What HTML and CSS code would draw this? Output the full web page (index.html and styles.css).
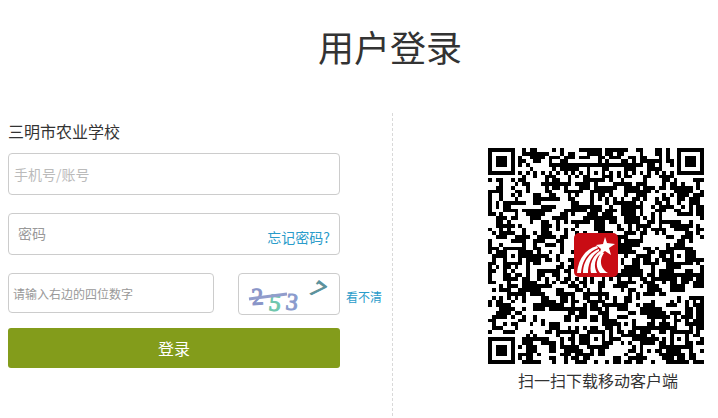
FILE: index.html
```html
<!DOCTYPE html>
<html lang="zh-CN">
<head>
  <meta charset="UTF-8">
  <meta name="viewport" content="width=device-width, initial-scale=1">
  <title>用户登录</title>
  <link rel="stylesheet" href="styles.css">
</head>
<body>
  <h1 class="title">用户登录</h1>
  <main class="content">
    <form class="login" onsubmit="return false">
      <h2 class="school">三明市农业学校</h2>
      <div class="field">
        <input class="account" type="text" placeholder="手机号/账号" aria-label="手机号/账号">
      </div>
      <div class="field">
        <input class="password" type="password" placeholder="密码" aria-label="密码">
        <a class="forgot" href="#">忘记密码?</a>
      </div>
      <div class="verify">
        <input class="code" type="text" placeholder="请输入右边的四位数字" aria-label="请输入右边的四位数字">
        <svg class="captcha" viewBox="0 0 100 40" role="img" aria-label="验证码">
          <text transform="translate(13 31) rotate(-4)" fill="#8995c8" stroke="#8995c8">2</text>
          <text transform="translate(29 36) rotate(7)" fill="#70c7ad" stroke="#70c7ad">5</text>
          <text transform="translate(46 35) rotate(8)" fill="#8a9bcd" stroke="#8a9bcd">3</text>
          <text transform="translate(69 18) rotate(38)" fill="#5c929c" stroke="#5c929c">7</text>
          <path d="M10 25L48 20" stroke="#929dcc" stroke-width="3"/>
        </svg>
        <a class="refresh" href="#">看不清</a>
      </div>
      <button class="submit" type="submit">登录</button>
    </form>
    <aside class="download">
      <figure>
        <svg class="qr" viewBox="0 0 216 216" role="img" aria-label="二维码">
          <g transform="scale(3.78947)">
            <path id="modules" shape-rendering="crispEdges"/>
          </g>
          <g transform="translate(86 85)">
            <rect width="44" height="44" rx="5" fill="#c90c14"/>
            <g fill="#fff">
              <path d="M31 4L33 10L41 11L35 15L37 22L31 18L25 22L27 16L22 12L29 11Z"/>
              <path d="M23 13C11 16 4 27 3 40L7 40C8 28 14 19 24 15Z"/>
              <path d="M25 16C15 20 9 29 9 40L14 40C14 30 18 22 25 18Z"/>
              <path d="M26 18C19 23 15 31 17 40L23 40C19 33 21 25 27 20Z"/>
              <path d="M28 19C22 26 21 34 26 40L34 40C26 35 25 27 30 20Z"/>
            </g>
          </g>
        </svg>
        <figcaption>扫一扫下载移动客户端</figcaption>
      </figure>
    </aside>
  </main>
  <script src="qr.js"></script>
</body>
</html>
```
FILE: styles.css
```css
* {
  box-sizing: border-box;
}

body {
  margin: 0;
  padding: 18px 0 0 8px;
  background: #fff;
  color: #333;
  font-family: "Noto Sans CJK SC", "Microsoft YaHei", sans-serif;
}

.title {
  margin: 0 0 39px;
  padding-left: 54px;
  font-size: 36px;
  font-weight: 400;
  line-height: 56px;
  text-align: center;
}

.content {
  display: grid;
  grid-template-columns: 385px 1fr;
}

.login {
  padding: 8px 0 48px;
  border-right: 1px dashed #d9d9d9;
}

.school {
  margin: 0 0 12px;
  font-size: 16px;
  font-weight: 400;
  line-height: 20px;
}

.field {
  position: relative;
  margin: 0 52px 18px 0;
}

input {
  display: block;
  width: 100%;
  height: 42px;
  border: 1px solid #ccc;
  border-radius: 4px;
  padding: 0 5px;
  background: #fff;
  color: #333;
  font: inherit;
  font-size: 14px;
}

input::placeholder {
  color: #999;
  opacity: 1;
}

.account::placeholder {
  color: #bbb;
}

.password {
  padding: 0 90px 2px 9px;
}

a {
  color: #2a9cca;
  text-decoration: none;
}

.forgot {
  position: absolute;
  right: 10px;
  bottom: 8px;
  font-size: 14px;
  line-height: 20px;
}

.verify {
  display: flex;
  align-items: flex-start;
  margin-bottom: 13px;
}

.code {
  flex: none;
  width: 206px;
  height: 40px;
  margin-right: 24px;
  padding: 0 4px;
  font-size: 12px;
}

.captcha {
  flex: none;
  width: 102px;
  height: 42px;
  border: 1px solid #ccc;
  border-radius: 4px;
  font-family: "Liberation Serif", serif;
  font-size: 24px;
}

.refresh {
  align-self: center;
  margin-left: 6px;
  padding-top: 6px;
  font-size: 12px;
  line-height: 18px;
  white-space: nowrap;
}

.submit {
  display: block;
  width: calc(100% - 52px);
  height: 40px;
  border: 0;
  border-radius: 3px;
  background: #839c1b;
  color: #fff;
  font: inherit;
  font-size: 16px;
  cursor: pointer;
}

.download {
  display: flex;
  justify-content: flex-end;
  padding: 35px 14px 0 0;
}

.download figure {
  margin: 0;
  text-align: center;
}

.qr {
  display: block;
  width: 216px;
  height: 216px;
}

.download figcaption {
  margin-top: 5px;
  padding-left: 4px;
  font-size: 16px;
  line-height: 22px;
}
```
FILE: qr.js
```js
const size = 57;
const path = document.getElementById('modules');
let seed = 20170;

function random() {
  seed = (seed * 1103515245 + 12345) % 2147483648;
  return seed / 2147483648;
}

// filler modules, neighbours often share a colour
const grid = [];
for (let y = 0; y < size; y++) {
  grid.push([]);
  for (let x = 0; x < size; x++) {
    const r = random();
    if (x > 0 && r < 0.1) {
      grid[y].push(grid[y][x - 1]);
    } else if (y > 0 && r < 0.3) {
      grid[y].push(grid[y - 1][x]);
    } else {
      grid[y].push(random() < 0.52);
    }
  }
}

// timing patterns
for (let i = 0; i < size; i++) {
  grid[6][i] = i % 2 === 0;
  grid[i][6] = i % 2 === 0;
}

// square rings around a centre, used by finder and alignment marks
function drawMark(cx, cy, radius, light) {
  for (let dy = -radius; dy <= radius; dy++) {
    for (let dx = -radius; dx <= radius; dx++) {
      const x = cx + dx;
      const y = cy + dy;
      if (x < 0 || y < 0 || x >= size || y >= size) continue;
      grid[y][x] = !light.includes(Math.max(Math.abs(dx), Math.abs(dy)));
    }
  }
}

drawMark(3, 3, 4, [2, 4]);
drawMark(size - 4, 3, 4, [2, 4]);
drawMark(3, size - 4, 4, [2, 4]);

[[28, 6], [6, 28], [28, 28], [50, 28], [28, 50], [50, 50]].forEach(([x, y]) => {
  drawMark(x, y, 2, [1]);
});

let d = '';
grid.forEach((row, y) => {
  row.forEach((dark, x) => {
    if (dark) d += `M${x} ${y}h1v1h-1z`;
  });
});
path.setAttribute('d', d);
```
